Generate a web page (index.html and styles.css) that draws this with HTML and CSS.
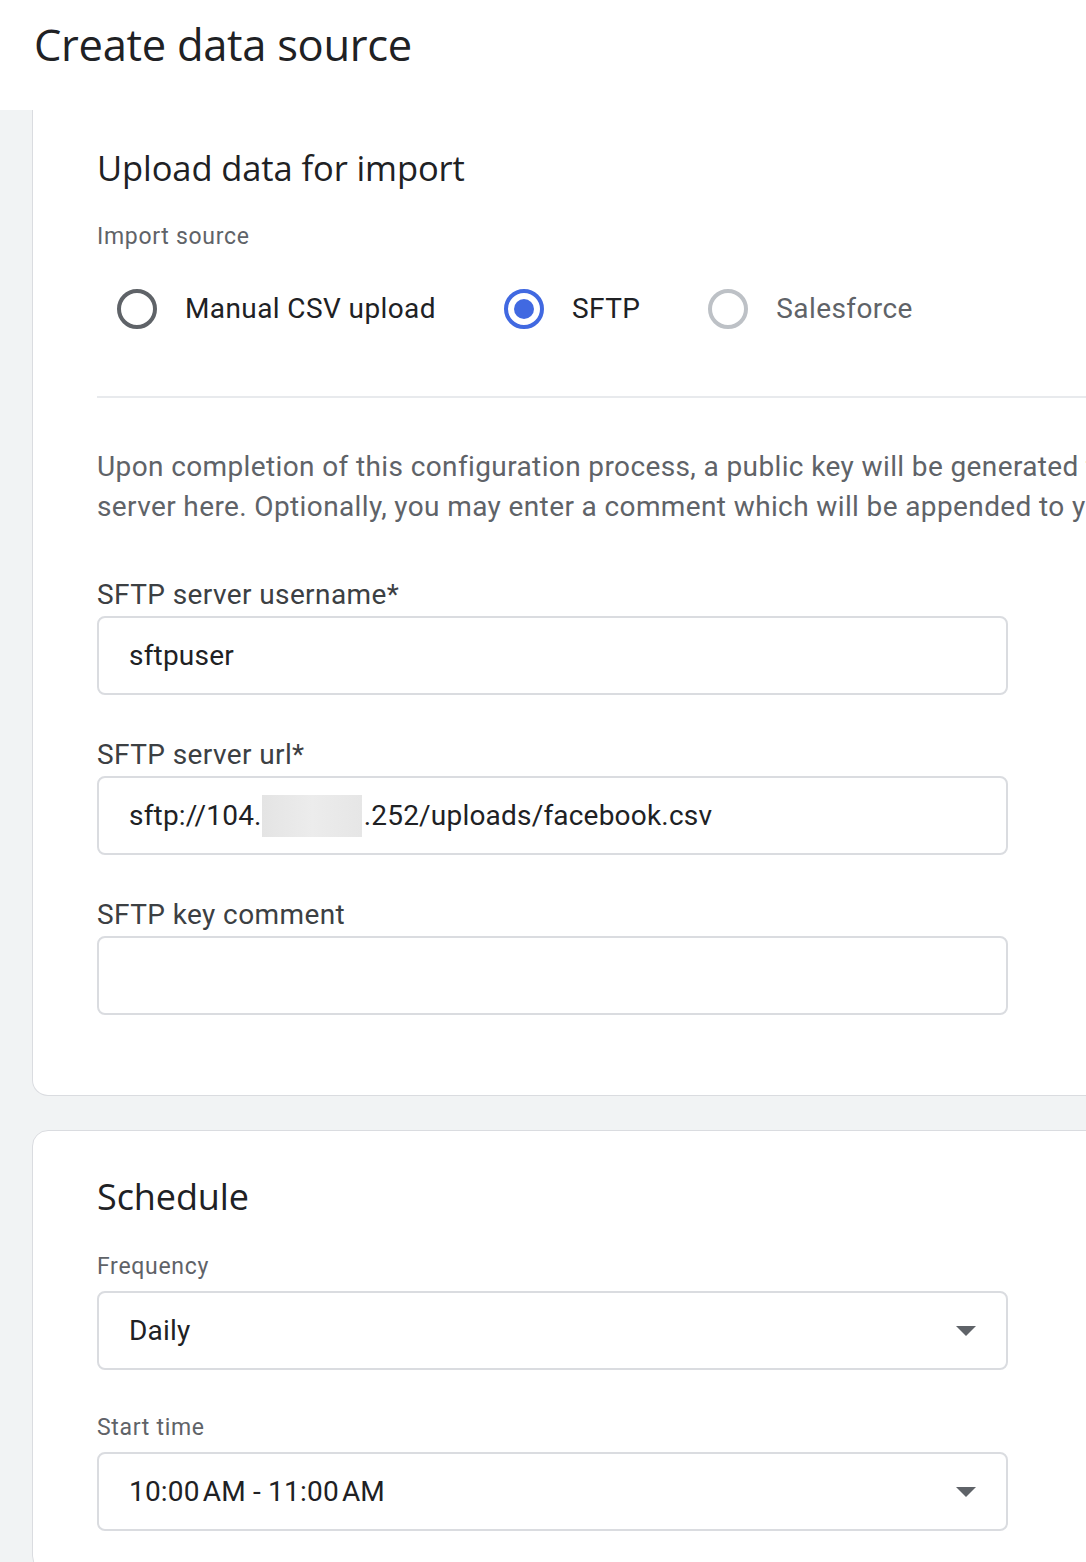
FILE: index.html
```html
<!DOCTYPE html>
<html>
<head>
<meta charset="utf-8">
<link rel="stylesheet" href="styles.css">
</head>
<body>
<header class="header">
  <h1 class="page-title">Create data source</h1>
</header>
<main class="main">
  <section class="card card-first">
    <h2 class="card-title">Upload data for import</h2>
    <div class="small-label">Import source</div>
    <div class="radio-row">
      <label class="radio">
        <span class="radio-circle"></span>
        <span class="radio-text">Manual CSV upload</span>
      </label>
      <label class="radio radio-checked">
        <span class="radio-circle"><span class="radio-dot"></span></span>
        <span class="radio-text">SFTP</span>
      </label>
      <label class="radio radio-disabled">
        <span class="radio-circle"></span>
        <span class="radio-text">Salesforce</span>
      </label>
    </div>
    <hr class="divider">
    <p class="desc">Upon completion of this configuration process, a public key will be generated that you can add to your SFTP<br>server here. Optionally, you may enter a comment which will be appended to your public key.</p>
    <div class="field">
      <div class="field-label">SFTP server username*</div>
      <div class="input">sftpuser</div>
    </div>
    <div class="field">
      <div class="field-label">SFTP server url*</div>
      <div class="input">sftp://104.<span class="blur"></span>.252/uploads/facebook.csv</div>
    </div>
    <div class="field">
      <div class="field-label">SFTP key comment</div>
      <div class="input"></div>
    </div>
  </section>
  <section class="card card-second">
    <h2 class="card-title">Schedule</h2>
    <div class="field">
      <div class="small-label">Frequency</div>
      <div class="input select">Daily<span class="arrow"></span></div>
    </div>
    <div class="field">
      <div class="small-label">Start time</div>
      <div class="input select">10:00&#8202;AM - 11:00&#8202;AM<span class="arrow"></span></div>
    </div>
  </section>
</main>
</body>
</html>
```
FILE: styles.css
```css
* { box-sizing: border-box; }
html, body { margin: 0; padding: 0; }
body {
  background: #f1f3f4;
  font-family: Roboto, "Liberation Sans", sans-serif;
  color: #202124;
  overflow: hidden;
  width: 1086px;
  height: 1562px;
}
.header {
  background: #fff;
  height: 110px;
  padding: 14px 0 0 34px;
}
.page-title {
  margin: 0;
  font-family: "Open Sans", sans-serif;
  font-weight: 400;
  font-size: 43.5px;
  line-height: 62px;
  color: #202124;
  letter-spacing: -0.3px;
}
.main {
  padding-left: 32px;
  width: 1300px;
}
.card {
  background: #fff;
  border: 1px solid #dadce0;
  border-radius: 16px;
  padding: 0 0 0 64px;
}
.card-first {
  border-top: none;
  border-radius: 0 0 16px 16px;
  padding-top: 33px;
  padding-bottom: 80px;
  margin-bottom: 34px;
}
.card-second {
  padding-top: 41px;
  padding-bottom: 40px;
}
.card-title {
  margin: 0;
  font-family: "Open Sans", sans-serif;
  font-weight: 400;
  font-size: 34.5px;
  line-height: 50px;
  color: #202124;
  letter-spacing: -0.1px;
}
.card-second .card-title {
  font-size: 36px;
}
.small-label {
  margin-top: 28px;
  font-size: 23px;
  line-height: 32px;
  color: #5f6368;
  letter-spacing: 0.7px;
}
.radio-row {
  display: flex;
  align-items: center;
  margin-top: 36px;
  padding-left: 20px;
  height: 40px;
}
.radio {
  display: flex;
  align-items: center;
  margin-right: 68px;
}
.radio-circle {
  width: 40px;
  height: 40px;
  border: 4px solid #5f6368;
  border-radius: 50%;
  display: flex;
  align-items: center;
  justify-content: center;
  margin-right: 28px;
}
.radio-checked .radio-circle { border-color: #4169e1; }
.radio-dot {
  width: 20px;
  height: 20px;
  border-radius: 50%;
  background: #4169e1;
}
.radio-disabled .radio-circle { border-color: #bdc1c6; }
.radio-text {
  font-size: 28px;
  line-height: 40px;
  color: #202124;
  letter-spacing: 0.4px;
}
.radio-disabled .radio-text { color: #5f6368; }
.divider {
  border: none;
  border-top: 2px solid #e8eaed;
  margin: 67px 0 0 0;
}
.desc {
  margin: 49px 0 0 0;
  font-size: 28px;
  line-height: 40px;
  color: #5f6368;
  white-space: nowrap;
  letter-spacing: 0.38px;
}
.field { margin-top: 46px; }
.card-first .desc + .field { margin-top: 48px; }
.card-first .field + .field { margin-top: 40px; }
.field-label {
  font-size: 28px;
  line-height: 40px;
  color: #3c4043;
  letter-spacing: 0.4px;
}
.input {
  position: relative;
  width: 911px;
  height: 79px;
  border: 2px solid #dadce0;
  border-radius: 8px;
  padding: 0 0 0 30px;
  display: flex;
  align-items: center;
  font-size: 28px;
  color: #202124;
  letter-spacing: 0.2px;
  margin-top: 1px;
}
.card-second .field { margin-top: 29px; }
.card-second .small-label { margin-top: 0; }
.card-second .input { margin-top: 8px; }
.card-second .field + .field { margin-top: 42px; }
.blur {
  display: inline-block;
  width: 100px;
  height: 42px;
  background: linear-gradient(90deg, #e4e4e4, #ececec 50%, #e6e6e6);
  margin-right: 2px;
}
.arrow {
  position: absolute;
  right: 30px;
  top: 50%;
  margin-top: -5px;
  width: 0;
  height: 0;
  border-left: 10px solid transparent;
  border-right: 10px solid transparent;
  border-top: 10px solid #5f6368;
}
```
